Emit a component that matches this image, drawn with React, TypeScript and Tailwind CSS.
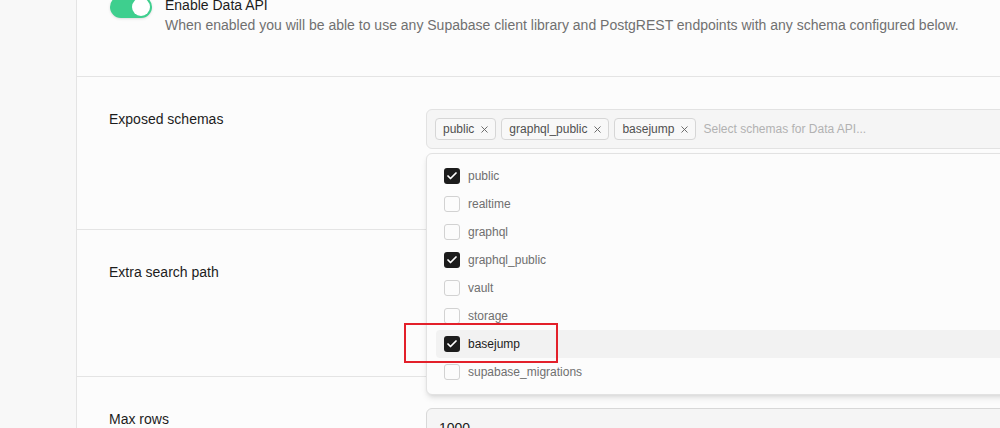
import React from "react";
import { Check, X } from "lucide-react";

const schemas = [
  { name: "public", checked: true },
  { name: "realtime", checked: false },
  { name: "graphql", checked: false },
  { name: "graphql_public", checked: true },
  { name: "vault", checked: false },
  { name: "storage", checked: false },
  { name: "basejump", checked: true, active: true },
  { name: "supabase_migrations", checked: false },
];

const selected = ["public", "graphql_public", "basejump"];

const App: React.FC = () => {
  return (
    <div
      className="flex h-[428px] w-[1000px] overflow-hidden bg-[#fcfcfc] text-[#1c1c1c]"
      style={{ fontFamily: '"Liberation Sans", Arial, sans-serif' }}
    >
      {/* left rail */}
      <aside className="w-[77px] shrink-0 border-r border-[#e4e4e4] bg-[#f8f8f8]" />

      <main className="relative flex-1">
        {/* Enable Data API */}
        <section className="flex h-[77px] items-start border-b border-[#e4e4e4] pl-[33px]">
          <div className="-mt-[5px] flex items-start gap-[13px]">
            <div className="mt-[1px] flex h-[22px] w-[42px] shrink-0 items-center justify-end rounded-full bg-[#3ecf8e] pr-[2px] shadow-sm">
              <div className="h-[18px] w-[18px] rounded-full bg-white" />
            </div>
            <div>
              <p className="text-[14px] leading-[20px]">Enable Data API</p>
              <p className="text-[14px] leading-[20px] text-[#707070]">
                When enabled you will be able to use any Supabase client library and PostgREST endpoints with any schema configured below.
              </p>
            </div>
          </div>
        </section>

        {/* Exposed schemas */}
        <section className="flex h-[153px] border-b border-[#e4e4e4] pt-[32px]">
          <div className="w-[349px] shrink-0 pl-[32px]">
            <p className="text-[14px] leading-[20px]">Exposed schemas</p>
          </div>
          <div className="-mr-[40px] flex h-[40px] flex-1 items-center gap-[5px] rounded-[6px] border border-[#e2e2e2] bg-[#f5f5f5] pl-[8px]">
            {selected.map((s) => (
              <span
                key={s}
                className="flex h-[22px] items-center gap-[5px] rounded-[4px] border border-[#d6d6d6] bg-[#f8f8f8] pl-[7px] pr-[5px] text-[12px] text-[#505050]"
              >
                {s}
                <X size={11} strokeWidth={2} className="text-[#606060]" />
              </span>
            ))}
            <span className="ml-[2px] text-[12px] text-[#b2b2b2]">Select schemas for Data API...</span>
          </div>
        </section>

        {/* Extra search path */}
        <section className="h-[147px] border-b border-[#e4e4e4] pt-[32px] pl-[32px]">
          <p className="text-[14px] leading-[20px]">Extra search path</p>
        </section>

        {/* Max rows */}
        <section className="flex pt-[32px]">
          <div className="w-[349px] shrink-0 pl-[32px]">
            <p className="text-[14px] leading-[20px]">Max rows</p>
          </div>
          <div className="-mr-[40px] -mt-[1px] flex h-[40px] flex-1 items-center rounded-[6px] border border-[#d8d8d8] bg-[#f5f5f5] pl-[12px] text-[14px]">
            1000
          </div>
        </section>

        {/* dropdown menu */}
        <div className="absolute left-[349px] top-[153px] -right-[40px] h-[242px] rounded-[6px] border border-[#e2e2e2] bg-[#fcfcfc] py-[8px] pl-[9px] shadow-md">
          {schemas.map((s) => (
            <div
              key={s.name}
              className={`flex h-[28px] items-center gap-[8px] rounded-[4px] pl-[8px] text-[12px] ${
                s.active ? "bg-[#f2f2f2] text-[#1c1c1c]" : "text-[#6f6f6f]"
              }`}
            >
              {s.checked ? (
                <span className="flex h-[16px] w-[16px] items-center justify-center rounded-[3px] bg-[#1c1c1c]">
                  <Check size={12} strokeWidth={3.5} className="text-white" />
                </span>
              ) : (
                <span className="h-[16px] w-[16px] rounded-[3px] border border-[#d2d2d2] bg-[#fcfcfc]" />
              )}
              {s.name}
            </div>
          ))}
        </div>

        {/* annotation box */}
        <div className="pointer-events-none absolute left-[327px] top-[323px] h-[40px] w-[154px] border-2 border-[#e3202a]" />
      </main>
    </div>
  );
};

export default App;
